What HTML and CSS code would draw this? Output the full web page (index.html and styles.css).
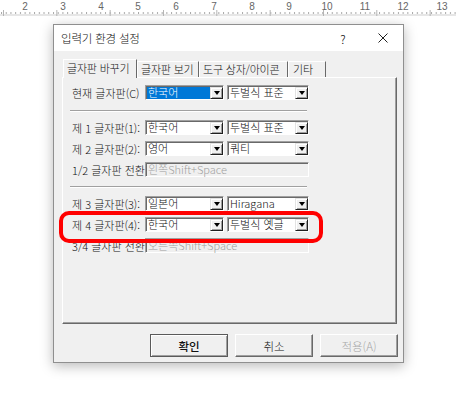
FILE: index.html
```html
<!DOCTYPE html>
<html lang="ko">
<head>
<meta charset="UTF-8" />
<title>입력기 환경 설정</title>
<link rel="stylesheet" href="styles.css">
</head>
<body>

<!-- ruler -->
<div class="ruler">
    <svg width="456" height="16" viewBox="0 0 456 16">
        <defs>
            <pattern id="small" x="1" y="0" width="4.725" height="16" patternUnits="userSpaceOnUse">
                <rect x="0" y="12" width="1" height="2" fill="#a8a8a8"/>
            </pattern>
            <pattern id="big" x="3" y="0" width="53.33" height="16" patternUnits="userSpaceOnUse">
                <rect x="0" y="10" width="1" height="6" fill="#b4b4b4"/>
            </pattern>
        </defs>
        <rect x="0" y="14" width="456" height="2" fill="#e6e6e6"/>
        <rect x="0" y="0" width="456" height="16" fill="url(#small)"/>
        <rect x="0" y="0" width="456" height="16" fill="url(#big)"/>
        <g class="nums" font-size="10" fill="#666" text-anchor="middle">
            <text x="25" y="10">2</text>
            <text x="63" y="10">3</text>
            <text x="101" y="10">4</text>
            <text x="138" y="10">5</text>
            <text x="176" y="10">6</text>
            <text x="214" y="10">7</text>
            <text x="252" y="10">8</text>
            <text x="289" y="10">9</text>
            <text x="327" y="10">10</text>
            <text x="365" y="10">11</text>
            <text x="403" y="10">12</text>
            <text x="442" y="10">13</text>
        </g>
    </svg>
</div>

<!-- dialog -->
<div class="dialog">
    <div class="titlebar">
        <span class="title">입력기 환경 설정</span>
        <span class="help">?</span>
        <span class="close">
            <svg width="10" height="10" viewBox="0 0 10 10">
                <path d="M0.5 0.5 L9.5 9.5 M9.5 0.5 L0.5 9.5" stroke="#222" stroke-width="1" fill="none"/>
            </svg>
        </span>
    </div>

    <div class="dlg-body">
        <div class="tabs">
            <div class="tab active t1">글자판 바꾸기</div>
            <div class="tab t2">글자판 보기</div>
            <div class="tab t3">도구 상자/아이콘</div>
            <div class="tab t4">기타</div>
        </div>

        <div class="panel">
            <div class="row">
                <span class="label">현재 글자판(C)</span>
                <div class="combo c1"><span class="val"><span class="sel">한국어</span></span><span class="arrow"></span></div>
                <div class="combo c2"><span class="val">두벌식 표준</span><span class="arrow"></span></div>
            </div>

            <div class="sep"></div>

            <div class="row">
                <span class="label">제 1 글자판(1):</span>
                <div class="combo c1"><span class="val">한국어</span><span class="arrow"></span></div>
                <div class="combo c2"><span class="val">두벌식 표준</span><span class="arrow"></span></div>
            </div>
            <div class="row">
                <span class="label">제 2 글자판(2):</span>
                <div class="combo c1"><span class="val">영어</span><span class="arrow"></span></div>
                <div class="combo c2"><span class="val">쿼티</span><span class="arrow"></span></div>
            </div>
            <div class="row">
                <span class="label">1/2 글자판 전환</span>
                <div class="field">왼쪽Shift+Space</div>
            </div>

            <div class="sep"></div>

            <div class="row">
                <span class="label">제 3 글자판(3):</span>
                <div class="combo c1"><span class="val">일본어</span><span class="arrow"></span></div>
                <div class="combo c2"><span class="val">Hiragana</span><span class="arrow"></span></div>
            </div>
            <div class="row">
                <span class="label">제 4 글자판(4):</span>
                <div class="combo c1"><span class="val">한국어</span><span class="arrow"></span></div>
                <div class="combo c2"><span class="val">두벌식 옛글</span><span class="arrow"></span></div>
            </div>
            <div class="row">
                <span class="label">3/4 글자판 전환</span>
                <div class="field">오른쪽Shift+Space</div>
            </div>

            <!-- annotation -->
            <div class="mark"></div>
        </div>

        <div class="buttons">
            <div class="btn default">확인</div>
            <div class="btn">취소</div>
            <div class="btn disabled">적용(A)</div>
        </div>
    </div>
</div>

</body>
</html>
```

FILE: styles.css
```css
*{
    margin:0;
    padding:0;
    box-sizing:border-box;
}

body{
    width:456px;
    height:410px;
    overflow:hidden;
    background:#fff;
    font-family:"Noto Sans CJK KR","Liberation Sans",sans-serif;
    font-size:11px;
    font-weight:300;
    color:#111;
}

.ruler{
    height:16px;
}

.ruler svg{
    display:block;
}

.nums{
    font-family:"Liberation Sans",sans-serif;
    font-weight:400;
}

/* dialog frame */
.dialog{
    margin:8px 0 0 53px;
    width:351px;
    background:#f0f0f0;
    border:1px solid #8f8f8f;
    box-shadow:0 3px 12px rgba(0,0,0,0.28);
}

.titlebar{
    height:26px;
    background:#fff;
    display:flex;
    align-items:center;
    padding-left:7px;
}

.title{
    flex:1;
    font-size:11.5px;
    letter-spacing:-0.2px;
}

.help{
    width:20px;
    text-align:center;
    font-size:12px;
}

.close{
    width:30px;
    margin:0 5px 0 15px;
    display:flex;
    justify-content:center;
}

.close svg{
    display:block;
}

.dlg-body{
    padding:8px 5px 5px 8px;
}

/* tabs */
.tabs{
    display:flex;
    height:19px;
    margin-left:1px;
    margin-bottom:-1px;
    position:relative;
    z-index:1;
}

.tab{
    height:16px;
    margin-top:2px;
    padding-left:3px;
    border:1px solid;
    border-color:#fff #696969 transparent #fff;
    border-bottom:none;
    line-height:15px;
    white-space:nowrap;
    letter-spacing:-0.2px;
}

.tab.active{
    height:19px;
    margin-top:0;
    background:#f0f0f0;
    line-height:17px;
}

.t1{ width:74px; }
.t2{ width:62px; }
.t3{ width:89px; }
.t4{ width:38px; padding-left:4px; }

/* panel */
.panel{
    position:relative;
    width:335px;
    height:247px;
    border:1px solid;
    border-color:#fff #696969 #696969 #fff;
    box-shadow:inset -1px -1px #a0a0a0;
    padding:7px 0 0 9px;
}

.row{
    display:flex;
    align-items:center;
    height:15px;
}

.row + .row{
    margin-top:6px;
}

.label{
    width:73px;
    white-space:nowrap;
}

.sep{
    margin:10px 0 8px -2px;
    width:237px;
    height:2px;
    border-top:1px solid #a0a0a0;
    border-bottom:1px solid #fff;
}

.sep + .row + .row + .row + .sep{
    margin-top:9px;
}

.combo{
    height:15px;
    display:flex;
    border:1px solid;
    border-color:#a0a0a0 #fff #fff #a0a0a0;
    box-shadow:inset 1px 1px #696969;
    background:#fff;
}

.c1{
    width:79px;
    margin-right:3px;
}

.c2{
    width:82px;
}

.val{
    flex:1;
    min-width:0;
    padding-left:2px;
    line-height:13px;
    white-space:nowrap;
}

.val .sel{
    display:block;
    height:12px;
    margin:1px 0 0 -1px;
    padding-left:1px;
    line-height:11px;
    background:#0078d7;
    color:#fff;
}

.arrow{
    width:13px;
    flex:none;
    margin:1px 0 0 0;
    background:#f0f0f0;
    border:1px solid;
    border-color:#e3e3e3 #202020 #202020 #e3e3e3;
    box-shadow:inset 1px 1px #fff, inset -1px -1px #a0a0a0;
    display:flex;
    align-items:center;
    justify-content:center;
}

.arrow::after{
    content:"";
    border-left:3px solid transparent;
    border-right:3px solid transparent;
    border-top:4px solid #000;
}

.field{
    width:164px;
    height:15px;
    border:1px solid;
    border-color:#a0a0a0 #fff #fff #a0a0a0;
    box-shadow:inset 1px 1px #696969;
    background:#f0f0f0;
    color:#a0a0a0;
    padding-left:2px;
    line-height:13px;
    white-space:nowrap;
}

/* red annotation box */
.mark{
    position:absolute;
    left:-4px;
    top:133px;
    width:264px;
    height:32px;
    border:4px solid #ff0000;
    border-radius:10px;
}

/* buttons */
.buttons{
    display:flex;
    justify-content:flex-end;
    gap:7px;
    margin-top:10px;
}

.btn{
    width:78px;
    height:23px;
    display:flex;
    align-items:center;
    justify-content:center;
    border:1px solid;
    border-color:#fff #696969 #696969 #fff;
    box-shadow:inset -1px -1px #a0a0a0;
    font-size:11.5px;
}

.btn.default{
    border-color:#5a5a5a;
    box-shadow:inset 1px 1px #fff, inset -1px -1px #a0a0a0;
    font-weight:500;
}

.btn.disabled{
    color:#a8a8a8;
}
```
